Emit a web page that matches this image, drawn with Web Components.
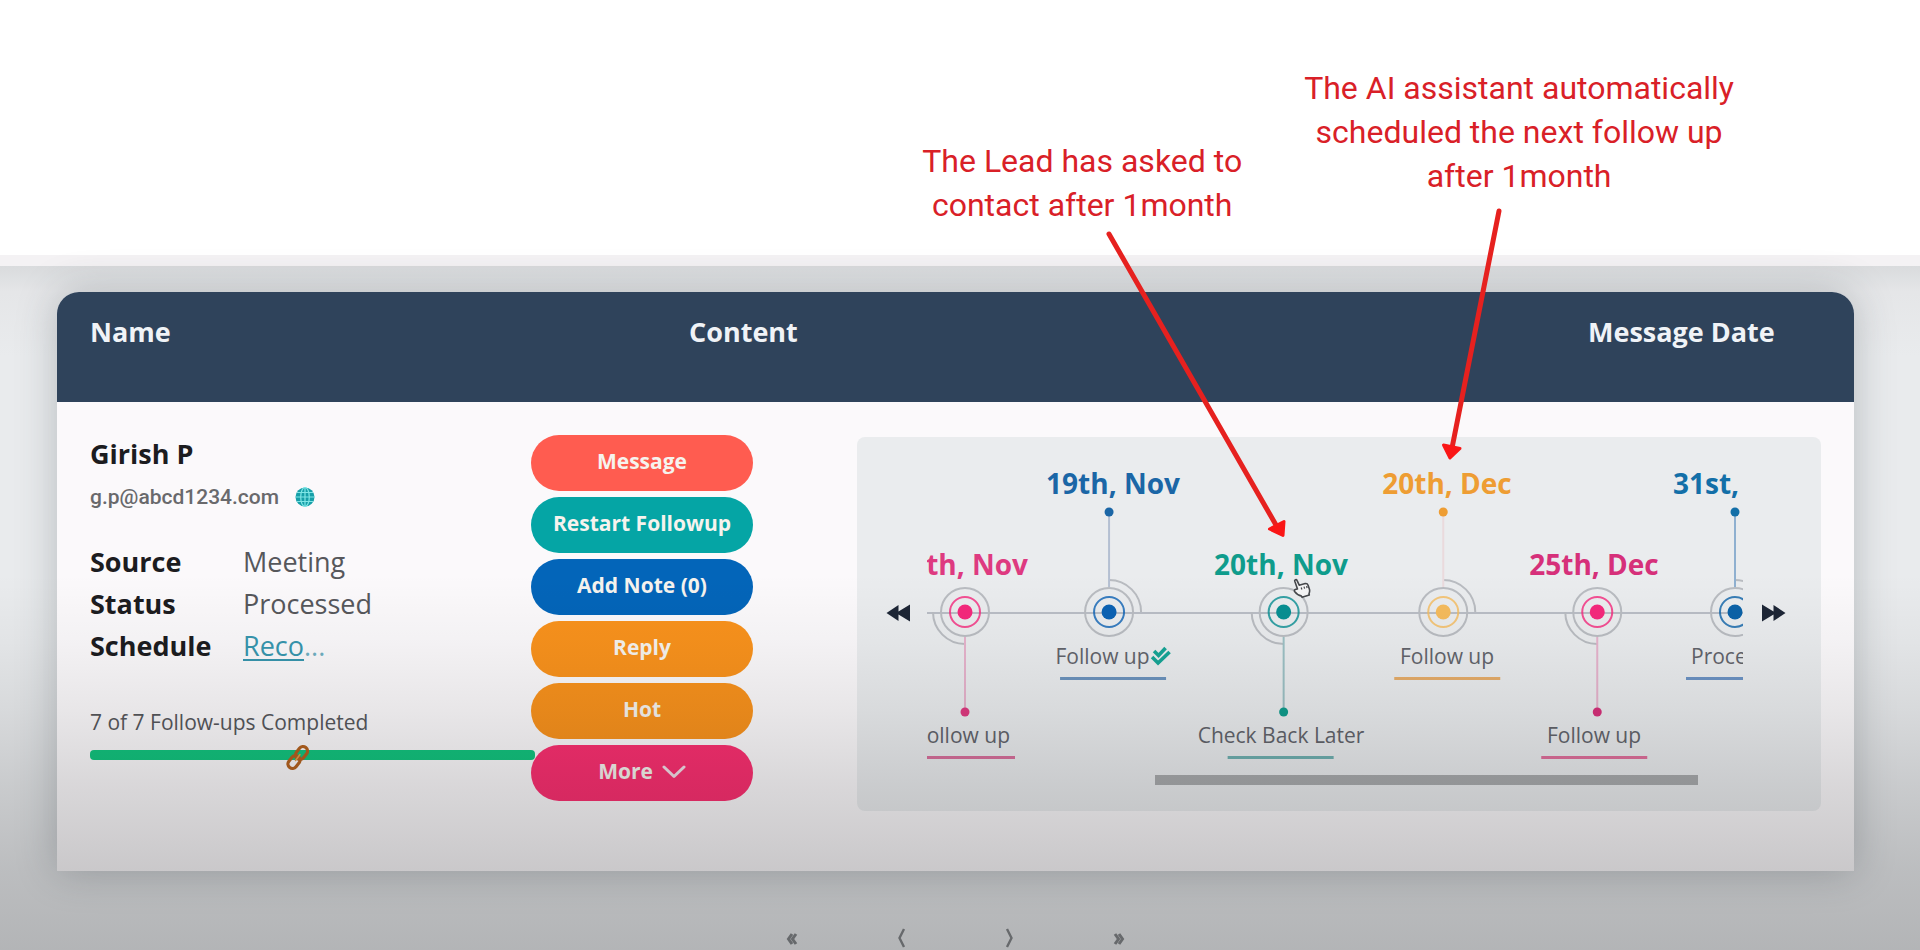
<!DOCTYPE html>
<html lang="en">
<head>
<meta charset="utf-8">
<meta name="viewport" content="width=device-width, initial-scale=1">
<title>Lead follow-ups</title>
<style>
  body { margin: 0; background: #fff; font-family: "Open Sans", "Noto Sans", sans-serif; }
</style>
</head>
<body>
<follow-up-page>
  <callout-note slot="notes" class="low" arrow="lead">The Lead has asked to<br>contact after 1month</callout-note>
  <callout-note slot="notes" arrow="assistant">The AI assistant automatically<br>scheduled the next follow up<br>after 1month</callout-note>
  <lead-table>
    <lead-details slot="details" name="Girish P" email="g.p@abcd1234.com" done="7" total="7">
      <span slot="source">Meeting</span>
      <span slot="status">Processed</span>
      <a slot="schedule" href="#schedule">Reco</a>
    </lead-details>
    <pill-button slot="actions" style="--fill:#ff5c50">Message</pill-button>
    <pill-button slot="actions" style="--fill:#05a5a5">Restart Followup</pill-button>
    <pill-button slot="actions" style="--fill:#0365b9">Add Note (0)</pill-button>
    <pill-button slot="actions" style="--fill:#f9921c">Reply</pill-button>
    <pill-button slot="actions" style="--fill:#f9921c">Hot</pill-button>
    <pill-button slot="actions" style="--fill:#fb2f70" menu>More</pill-button>
    <time-line slot="timeline">
      <time-node style="--x:35px;--ink:#de3a80;--core:#f5287c;--stem:#e6b3cc;--rule:#d8709c" date="th, Nov" label="ollow up" side="down" cut="start"></time-node>
      <time-node style="--x:186px;--ink:#1b66a6;--core:#0b62b4;--stem:#b4bfd2;--rule:#6c93bd" date="19th, Nov" label="Follow up" side="up" done></time-node>
      <time-node style="--x:354px;--ink:#0f9c8c;--core:#078f92;--stem:#9cc0c4;--rule:#6fb0b0" date="20th, Nov" label="Check Back Later" side="down"></time-node>
      <time-node style="--x:520px;--ink:#ee9d33;--core:#f5bb5c;--stem:#eadadc;--rule:#e6ad6a" date="20th, Dec" label="Follow up" side="up"></time-node>
      <time-node style="--x:667px;--ink:#d6307a;--core:#f5287c;--stem:#e6b3cc;--rule:#e0709c" date="25th, Dec" label="Follow up" side="down"></time-node>
      <time-node style="--x:812px;--ink:#136fa8;--core:#0b62a8;--stem:#8fb0d0;--rule:#6c93c4" date="31st," label="Proce" side="up" cut="end"></time-node>
    </time-line>
  </lead-table>
  <page-nav></page-nav>
</follow-up-page>

<script>
const define = (name, html, setup) => {
  const tpl = document.createElement('template');
  tpl.innerHTML = html;
  customElements.define(name, class extends HTMLElement {
    connectedCallback() {
      if (this.shadowRoot) return;
      const root = this.attachShadow({ mode: 'open' });
      root.append(tpl.content.cloneNode(true));
      if (setup) setup(this, root);
    }
  });
};

define('follow-up-page', `
<style>
  :host { display: flex; flex-direction: column; min-height: 100vh; }
  header { display: flex; justify-content: flex-end; align-items: flex-start; gap: 62px;
    box-sizing: border-box; height: 255px; padding: 66px 186px 0 0; position: relative; z-index: 3; }
  ::slotted(.low) { margin-top: 73px; }
  main { flex: 1; position: relative; padding: 26px 66px 0 57px; border-top: 11px solid #f4f2f4;
    background: linear-gradient(#d9dbdd, #e5e6e8 26px, #e9ebed 90px); }
  main::after { content: ""; position: absolute; inset: 0; z-index: 2; pointer-events: none;
    background: linear-gradient(rgba(8,8,10,0) 45%, rgba(8,8,10,.03) 55%, rgba(8,8,10,.08) 65%, rgba(8,8,10,.14) 76%, rgba(8,8,10,.2) 88%, rgba(8,8,10,.24) 100%); }
</style>
<header><slot name="notes"></slot></header>
<main><slot></slot></main>`);

define('callout-note', `
<style>
  :host { display: block; position: relative; font: 400 32px/44px Roboto, sans-serif; color: #d92027; text-align: center; white-space: nowrap; }
  svg { position: absolute; left: 50%; top: 100%; width: 1px; height: 1px; overflow: visible; pointer-events: none; }
  line { stroke: #e6211f; stroke-width: 5; stroke-linecap: round; }
  path { fill: #fa1616; stroke: #fa1616; stroke-width: 3; stroke-linejoin: round; }
  g { display: none; }
  :host([arrow="lead"]) .lead, :host([arrow="assistant"]) .assistant { display: inline; }
</style>
<slot></slot>
<svg aria-hidden="true">
  <g class="lead"><line x1="27" y1="7" x2="194" y2="298"/><path d="M187.500 302 L202 294.500 L201 308.500 Z"/></g>
  <g class="assistant"><line x1="-20" y1="13" x2="-67" y2="250"/><path d="M-75.500 247 L-59 250.500 L-69 260 Z"/></g>
</svg>`);

define('lead-table', `
<style>
  :host { display: block; background: #fbf9fb; border-radius: 22px 22px 0 0; box-shadow: 0 0 40px rgba(50,60,70,.28); }
  table { width: 100%; border-collapse: separate; border-spacing: 0; table-layout: fixed; }
  .a { width: 474px; } .b { width: 158px; } .c { width: 166px; } .e { width: 266px; }
  th { height: 88px; padding: 22px 0 0; background: #2f435b; color: #f0f3f7; font: 700 27px/36px "Open Sans", sans-serif; text-align: left; vertical-align: top; }
  th:first-child { border-radius: 22px 0 0 0; padding-left: 33px; }
  th:last-child { border-radius: 0 22px 0 0; }
  td { padding: 0; vertical-align: top; }
  td:first-child { padding: 34px 0 0 33px; }
  .actions { display: flex; flex-direction: column; gap: 6px; padding: 33px 0 70px; width: 222px; position: relative; z-index: 1; }
  td:last-child { padding: 35px 33px 0 2px; }
</style>
<table>
  <colgroup><col class="a"><col class="b"><col class="c"><col><col class="e"></colgroup>
  <thead><tr><th scope="col" colspan="2">Name</th><th scope="col" colspan="2">Content</th><th scope="col">Message Date</th></tr></thead>
  <tbody><tr>
    <td><slot name="details"></slot></td>
    <td colspan="2"><div class="actions"><slot name="actions"></slot></div></td>
    <td colspan="2"><slot name="timeline"></slot></td>
  </tr></tbody>
</table>`);

define('lead-details', `
<style>
  :host { display: block; color: #56575b; }
  h2 { margin: 0 0 11px; font-size: 27px; line-height: 36px; font-weight: 700; color: #1c1c1f; }
  .mail { display: flex; align-items: center; gap: 16px; height: 28px; margin-bottom: 30px; font: 500 21px/28px Roboto, sans-serif; color: #69696c; }
  .mail svg { width: 20px; height: 20px; }
  dl { display: grid; grid-template-columns: 153px 1fr; margin: 0 0 41px; font-size: 27px; line-height: 42px; }
  dt { font-weight: 700; color: #1c1c1f; }
  dd { margin: 0; }
  .more { color: #6fb0c2; }
  ::slotted(a) { color: #3796ae; text-decoration: underline; text-decoration-thickness: 2px; text-underline-offset: 3px; }
  label { display: block; font-size: 21px; line-height: 28px; margin-bottom: 14px; }
  .bar { position: relative; height: 10px; margin-right: -4px; }
  progress { display: block; width: 100%; height: 10px; appearance: none; border: 0; border-radius: 4px; overflow: hidden; background: #cfd3d5; }
  progress::-webkit-progress-bar { background: #cfd3d5; }
  progress::-webkit-progress-value { background: #12c47e; }
  progress::-moz-progress-bar { background: #12c47e; }
  .chain { position: absolute; left: 195px; top: -8px; width: 26px; height: 30px; }
</style>
<h2></h2>
<div class="mail"><span></span>
  <svg viewBox="0 0 20 20" aria-hidden="true"><circle cx="10" cy="10" r="9.500" fill="#169fa8"/><g fill="none" stroke="#7fe6e6" stroke-width="1.200"><ellipse cx="10" cy="10" rx="4.300" ry="9.500"/><path d="M10 .5v19M.5 10h19M2 5.500h16M2 14.500h16"/></g></svg>
</div>
<dl>
  <dt>Source</dt><dd><slot name="source"></slot></dd>
  <dt>Status</dt><dd><slot name="status"></slot></dd>
  <dt>Schedule</dt><dd><slot name="schedule"></slot><span class="more">...</span></dd>
</dl>
<label for="p"></label>
<div class="bar"><progress id="p"></progress>
  <svg class="chain" viewBox="0 0 26 30" fill="none" aria-hidden="true"><g stroke="#b5621f" stroke-width="3.200"><rect x="-4.500" y="-7" width="9" height="14" rx="4.500" transform="translate(9 20) rotate(38)"/><rect x="-4.500" y="-7" width="9" height="14" rx="4.500" transform="translate(16.500 11) rotate(38)"/></g><path d="M10.500 18.500 15 12.500" stroke="#e0a04c" stroke-width="1.500" stroke-linecap="round"/></svg>
</div>`, (el, root) => {
  const at = n => el.getAttribute(n);
  root.querySelector('h2').textContent = at('name');
  root.querySelector('.mail span').textContent = at('email');
  root.querySelector('label').textContent = `${at('done')} of ${at('total')} Follow-ups Completed`;
  const p = root.querySelector('progress');
  p.max = at('total'); p.value = at('done');
});

define('pill-button', `
<style>
  :host { display: block; }
  button { display: flex; align-items: center; justify-content: center; gap: 9px; box-sizing: border-box; width: 100%; height: 56px; padding: 0 0 4px;
    border: 0; border-radius: 28px; background: var(--fill); color: #f6f3ee; font: 700 21px/28px "Open Sans", sans-serif; white-space: nowrap; cursor: pointer; }
  svg { display: none; width: 24px; height: 15px; }
  :host([menu]) svg { display: block; }
</style>
<button type="button"><slot></slot><svg viewBox="0 0 24 15" fill="none" stroke="#f3dfe8" stroke-width="3" stroke-linecap="round" stroke-linejoin="round" aria-hidden="true"><path d="M2 3l10 9.500L22 3"/></svg></button>`);

define('time-line', `
<style>
  :host { display: flex; align-items: flex-start; background: #eaecee; border-radius: 8px; }
  button { flex: none; border: 0; background: none; height: 26px; margin-top: 163px; cursor: pointer; text-align: left; }
  .prev { width: 70px; padding: 0 0 0 29px; }
  .next { width: 78px; padding: 0 0 0 18px; }
  button svg { display: block; width: 25px; height: 18px; fill: #1d2636; }
  .view { flex: 1; min-width: 0; overflow: hidden; padding-bottom: 26px; }
  .canvas { position: relative; height: 338px; }
  .canvas::before { content: ""; position: absolute; left: 0; right: 0; top: 175px; height: 2px; background: #b9bdc5; }
  .thumb { height: 10px; width: 66.5%; margin-left: 28%; background: #a9abad; }
  .hand { position: absolute; left: 366px; top: 141px; width: 18px; height: 20px; }
</style>
<button class="prev" type="button" aria-label="Earlier"><svg viewBox="0 0 25 18"><path d="M12.500 1v6.500L24 .5v17L12.500 10.500V17L.5 9z"/></svg></button>
<div class="view">
  <div class="canvas"><slot></slot>
    <svg class="hand" viewBox="0 0 18 20" fill="#f4f4f5" stroke="#45474b" stroke-width="1.600" stroke-linejoin="round" aria-hidden="true"><path d="M4.500 11 1.800 3.200c-.5-1.600 1.600-2.200 2.200-.8l2.200 4.800 6-1.600c1.500-.3 2.400.4 2.900 1.700l1.400 4.200c.4 1.600.2 2.600-.5 4.300l.3 1.200-7.300 2.200-.8-1.300c-2-.3-4.600-2-6.600-4.500-.7-1.400.7-2.400 2.900-2.400z"/><path d="M8.200 9.500l.7 2M11 8.700l.6 2M13.600 8l.5 2" stroke-width="1.200"/></svg>
  </div>
  <div class="thumb"></div>
</div>
<button class="next" type="button" aria-label="Later"><svg viewBox="0 0 25 18"><path d="M12.500 1v6.500L1 .5v17l11.500-7V17l12-8z"/></svg></button>`);

define('time-node', `
<style>
  :host { position: absolute; left: var(--x); top: 28px; transform: translateX(-50%); display: flex; flex-direction: column; align-items: center; white-space: nowrap; }
  :host([side="down"]) { top: 109px; }
  .date { font-size: 28px; line-height: 36px; font-weight: 700; color: var(--ink); }
  svg.mark { display: block; width: 72px; height: 141px; overflow: visible; margin-left: -8px; }
  :host([side="down"]) svg.mark { height: 139px; margin-left: 6px; }
  .label { display: flex; align-items: center; font-size: 21px; line-height: 28px; height: 28px; color: #62646b; }
  .rule { width: 106px; height: 3px; margin-top: 7px; background: var(--rule); }
  .check { display: none; width: 21px; height: 20px; }
  :host([done]) .check { display: block; }
  :host([cut]) .date { width: 132px; }
  :host([cut]) .label { width: 96px; }
  :host([cut="start"]) .date { text-align: right; }
  :host([cut="start"]) .label { justify-content: flex-end; }
  .ring { fill: none; stroke: #b9bcc1; stroke-width: 2; }
  .mid { fill: none; stroke: var(--core); stroke-width: 2; opacity: .8; }
  .core { fill: var(--core); }
  .end { fill: var(--ink); }
  .stem { stroke: var(--stem); stroke-width: 2; }
</style>
<div class="date"></div>
<svg class="mark" aria-hidden="true"></svg>
<div class="label"><span></span><svg class="check" viewBox="0 0 21 20" fill="none" stroke="#16a596" stroke-width="3.600" aria-hidden="true"><path d="M4 5l4.500 4.500L15.500 2"/><path d="M2 11l6 6L19.500 6"/></svg></div>
<div class="rule"></div>`, (el, root) => {
  const up = el.getAttribute('side') === 'up';
  root.querySelector('.date').textContent = el.getAttribute('date');
  root.querySelector('.label span').textContent = el.getAttribute('label');
  const cy = up ? 111 : 30, s = up ? -1 : 1;
  root.querySelector('.mark').innerHTML = `<g transform="translate(36 ${cy})">
    <circle class="ring" r="24"/>
    <path class="ring" d="${up ? 'M0 -32A32 32 0 0 1 32 0' : 'M0 32A32 32 0 0 1 -32 0'}"/>
    <path class="stem" d="M0 ${s * 25}V${s * 100}"/>
    <circle class="end" cy="${s * 100}" r="4.500"/>
    <circle class="mid" r="15"/><circle class="core" r="7.500"/></g>`;
});

define('page-nav', `
<style>
  :host { display: block; margin-top: 55px; }
  nav { display: flex; justify-content: center; }
  button { width: 109px; height: 24px; padding: 0; border: 0; background: none; display: flex; align-items: center; justify-content: center; color: #84878a; cursor: pointer; }
  svg { width: 14px; height: 20px; fill: none; stroke: currentColor; stroke-width: 2.400; }
</style>
<nav aria-label="Pages">
  <button type="button" aria-label="First page"><svg viewBox="0 0 14 20"><path d="M7 6 3.500 11 7 16M11 6 7.500 11 11 16" stroke-width="3"/></svg></button>
  <button type="button" aria-label="Previous page"><svg viewBox="0 0 14 20"><path d="M10 1 5.500 10 10 19"/></svg></button>
  <button type="button" aria-label="Next page"><svg viewBox="0 0 14 20"><path d="M4 1 8.500 10 4 19"/></svg></button>
  <button type="button" aria-label="Last page"><svg viewBox="0 0 14 20"><path d="M3 6 6.500 11 3 16M7 6 10.500 11 7 16" stroke-width="3"/></svg></button>
</nav>`);
</script>
</body>
</html>
